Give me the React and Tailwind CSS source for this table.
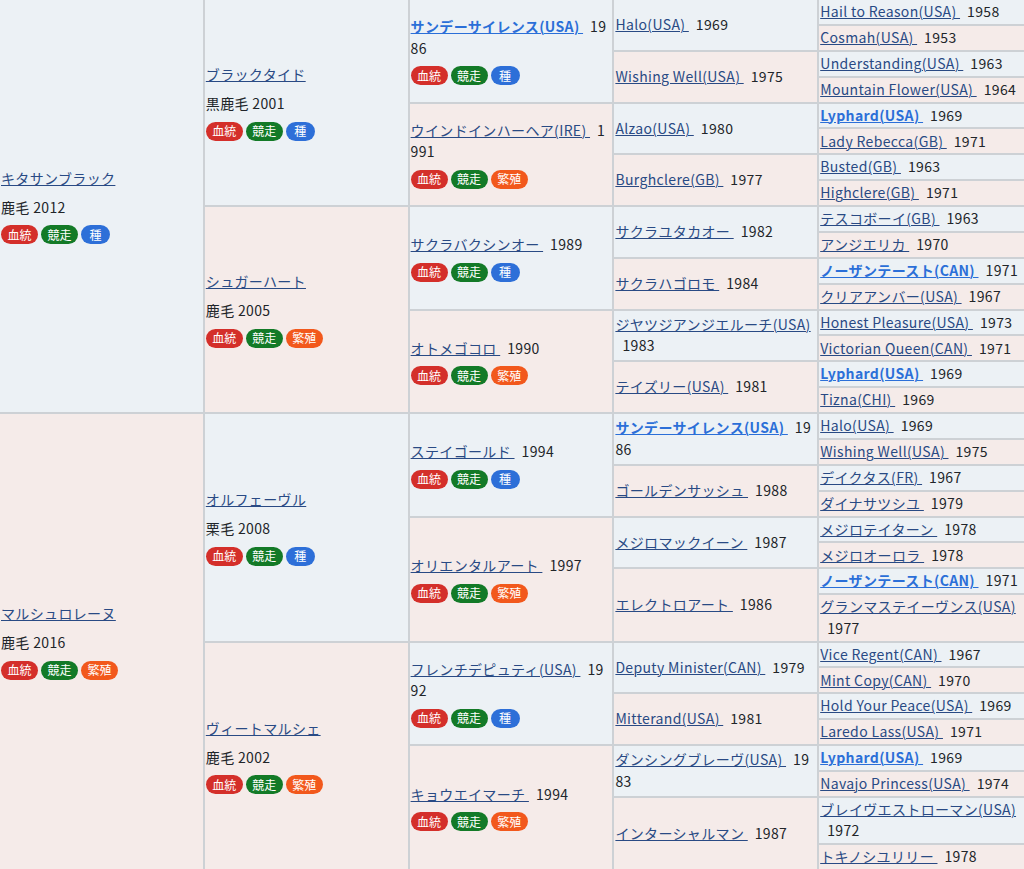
import clsx from "clsx";

const BADGE_COLORS = {
  血統: "bg-[#d42f2a]",
  競走: "bg-[#137a27]",
  種: "bg-[#2d6fd8]",
  繁殖: "bg-[#f2581c]",
};

// gen1 / gen2: name, coat + year, badges
const GEN1 = [
  { name: "キタサンブラック", info: "鹿毛 2012", badges: ["血統", "競走", "種"] },
  { name: "マルシュロレーヌ", info: "鹿毛 2016", badges: ["血統", "競走", "繁殖"] },
];

const GEN2 = [
  { name: "ブラックタイド", info: "黒鹿毛 2001", badges: ["血統", "競走", "種"] },
  { name: "シュガーハート", info: "鹿毛 2005", badges: ["血統", "競走", "繁殖"] },
  { name: "オルフェーヴル", info: "栗毛 2008", badges: ["血統", "競走", "種"] },
  { name: "ヴィートマルシェ", info: "鹿毛 2002", badges: ["血統", "競走", "繁殖"] },
];

const GEN3 = [
  { name: "サンデーサイレンス(USA)", year: 1986, bold: true, badges: ["血統", "競走", "種"] },
  { name: "ウインドインハーヘア(IRE)", year: 1991, badges: ["血統", "競走", "繁殖"] },
  { name: "サクラバクシンオー", year: 1989, badges: ["血統", "競走", "種"] },
  { name: "オトメゴコロ", year: 1990, badges: ["血統", "競走", "繁殖"] },
  { name: "ステイゴールド", year: 1994, badges: ["血統", "競走", "種"] },
  { name: "オリエンタルアート", year: 1997, badges: ["血統", "競走", "繁殖"] },
  { name: "フレンチデピュティ(USA)", year: 1992, badges: ["血統", "競走", "種"] },
  { name: "キョウエイマーチ", year: 1994, badges: ["血統", "競走", "繁殖"] },
];

const GEN4 = [
  { name: "Halo(USA)", year: 1969 },
  { name: "Wishing Well(USA)", year: 1975 },
  { name: "Alzao(USA)", year: 1980 },
  { name: "Burghclere(GB)", year: 1977 },
  { name: "サクラユタカオー", year: 1982 },
  { name: "サクラハゴロモ", year: 1984 },
  { name: "ジヤツジアンジエルーチ(USA)", year: 1983 },
  { name: "テイズリー(USA)", year: 1981 },
  { name: "サンデーサイレンス(USA)", year: 1986, bold: true },
  { name: "ゴールデンサッシュ", year: 1988 },
  { name: "メジロマックイーン", year: 1987 },
  { name: "エレクトロアート", year: 1986 },
  { name: "Deputy Minister(CAN)", year: 1979 },
  { name: "Mitterand(USA)", year: 1981 },
  { name: "ダンシングブレーヴ(USA)", year: 1983 },
  { name: "インターシャルマン", year: 1987 },
];

const GEN5 = [
  { name: "Hail to Reason(USA)", year: 1958 },
  { name: "Cosmah(USA)", year: 1953 },
  { name: "Understanding(USA)", year: 1963 },
  { name: "Mountain Flower(USA)", year: 1964 },
  { name: "Lyphard(USA)", year: 1969, bold: true },
  { name: "Lady Rebecca(GB)", year: 1971 },
  { name: "Busted(GB)", year: 1963 },
  { name: "Highclere(GB)", year: 1971 },
  { name: "テスコボーイ(GB)", year: 1963 },
  { name: "アンジエリカ", year: 1970 },
  { name: "ノーザンテースト(CAN)", year: 1971, bold: true },
  { name: "クリアアンバー(USA)", year: 1967 },
  { name: "Honest Pleasure(USA)", year: 1973 },
  { name: "Victorian Queen(CAN)", year: 1971 },
  { name: "Lyphard(USA)", year: 1969, bold: true },
  { name: "Tizna(CHI)", year: 1969 },
  { name: "Halo(USA)", year: 1969 },
  { name: "Wishing Well(USA)", year: 1975 },
  { name: "デイクタス(FR)", year: 1967 },
  { name: "ダイナサツシユ", year: 1979 },
  { name: "メジロテイターン", year: 1978 },
  { name: "メジロオーロラ", year: 1978 },
  { name: "ノーザンテースト(CAN)", year: 1971, bold: true },
  { name: "グランマステイーヴンス(USA)", year: 1977 },
  { name: "Vice Regent(CAN)", year: 1967 },
  { name: "Mint Copy(CAN)", year: 1970 },
  { name: "Hold Your Peace(USA)", year: 1969 },
  { name: "Laredo Lass(USA)", year: 1971 },
  { name: "Lyphard(USA)", year: 1969, bold: true },
  { name: "Navajo Princess(USA)", year: 1974 },
  { name: "ブレイヴエストローマン(USA)", year: 1972 },
  { name: "トキノシユリリー", year: 1978 },
];

const GENS = [GEN1, GEN2, GEN3, GEN4, GEN5];

function HorseLink({ horse }) {
  return (
    <a
      href="#"
      className={clsx(
        "underline decoration-1",
        horse.bold ? "font-bold text-[#2b6fd8]" : "text-[#294a84]"
      )}
    >
      {horse.name + " "}
    </a>
  );
}

function Badges({ list }) {
  return (
    <div className="mt-[7px] flex gap-[3px] tracking-normal">
      {list.map((b) => (
        <span
          key={b}
          className={clsx(
            "inline-flex h-[19px] min-w-[29px] items-center justify-center rounded-full px-[6.5px] text-[12px] leading-none text-white",
            BADGE_COLORS[b]
          )}
        >
          {b}
        </span>
      ))}
    </div>
  );
}

function Cell({ gen, idx, span }) {
  const horse = GENS[gen - 1][idx];
  return (
    <td
      rowSpan={span}
      className={clsx(
        "border-b-2 border-[#cdd1d5] px-px py-[1.2px] align-middle break-all",
        gen < 5 && "border-r-2",
        idx % 2 === 0 ? "bg-[#ecf1f5]" : "bg-[#f5ebe9]"
      )}
    >
      {gen <= 2 ? (
        <>
          <div>
            <HorseLink horse={horse} />
          </div>
          <div className="mt-[7.5px]">{horse.info}</div>
          <Badges list={horse.badges} />
        </>
      ) : (
        <>
          <div>
            <HorseLink horse={horse} />
            <span className="ml-[7px]">{horse.year}</span>
          </div>
          {horse.badges && <Badges list={horse.badges} />}
        </>
      )}
    </td>
  );
}

export default function App() {
  const rows = [];
  for (let i = 0; i < 32; i++) {
    const cells = [];
    for (let gen = 1; gen <= 5; gen++) {
      const span = 32 >> gen;
      if (i % span === 0) {
        cells.push(<Cell key={gen} gen={gen} idx={i / span} span={span} />);
      }
    }
    rows.push(<tr key={i}>{cells}</tr>);
  }

  return (
    <div className="min-h-screen bg-white font-['Noto_Sans_CJK_JP','Noto_Sans',sans-serif]">
      <table className="w-full table-fixed border-separate border-spacing-0 text-[14px] leading-[21.5px] tracking-[0.35px] text-[#212529]">
        <colgroup>
          <col className="w-1/5" />
          <col className="w-1/5" />
          <col className="w-1/5" />
          <col className="w-1/5" />
          <col className="w-1/5" />
        </colgroup>
        <tbody>{rows}</tbody>
      </table>
    </div>
  );
}
